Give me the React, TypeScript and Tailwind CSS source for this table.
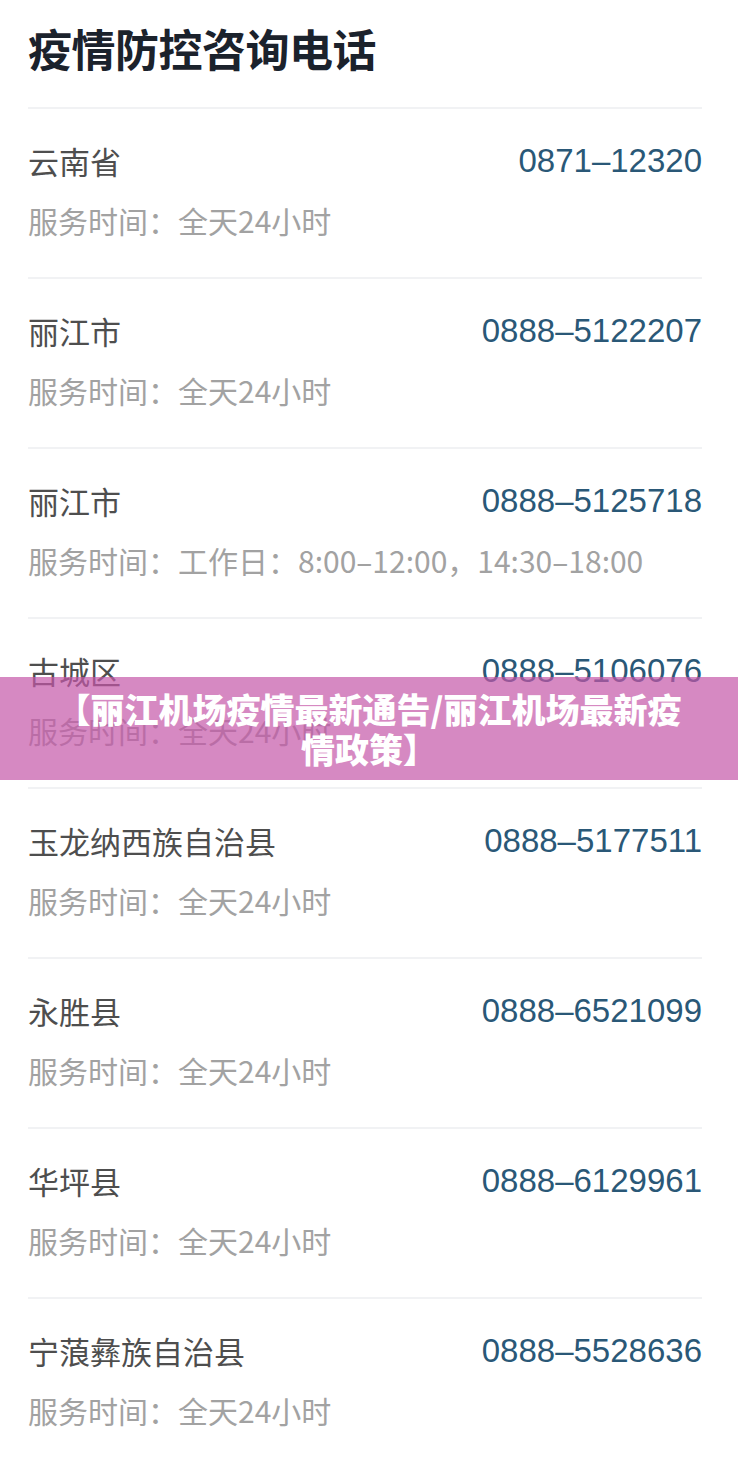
import React from "react";

interface Hotline {
  area: string;
  phone: string;
  hours: string;
}

const hotlines: Hotline[] = [
  { area: "云南省", phone: "0871–12320", hours: "全天24小时" },
  { area: "丽江市", phone: "0888–5122207", hours: "全天24小时" },
  { area: "丽江市", phone: "0888–5125718", hours: "工作日：8:00–12:00，14:30–18:00" },
  { area: "古城区", phone: "0888–5106076", hours: "全天24小时" },
  { area: "玉龙纳西族自治县", phone: "0888–5177511", hours: "全天24小时" },
  { area: "永胜县", phone: "0888–6521099", hours: "全天24小时" },
  { area: "华坪县", phone: "0888–6129961", hours: "全天24小时" },
  { area: "宁蒗彝族自治县", phone: "0888–5528636", hours: "全天24小时" },
];

const cjk = "font-['Noto_Sans_CJK_SC','Noto_Sans',sans-serif]";

export default function App() {
  return (
    <div className={`relative w-[738px] h-[1459px] overflow-hidden bg-white ${cjk}`}>
      <div className="pl-[28px] pr-[36px]">
        {/* Title */}
        <div className="h-[107px] pt-[16px]">
          <h1 className="text-[44px] leading-[64px] font-bold text-[#1b222c] tracking-[-0.5px]">疫情防控咨询电话</h1>
        </div>

        {/* Hotline list */}
        {hotlines.map((h, i) => (
          <div key={i} className="h-[170px] border-t-[2px] border-[#f1f2f4] pt-[30px]">
            <div className="flex items-center justify-between h-[44px]">
              <span className="text-[31px] text-[#4e4e4e]">{h.area}</span>
              <span className="font-['Liberation_Sans',sans-serif] text-[33px] text-[#2a5877]">{h.phone}</span>
            </div>
            <div className="mt-[15px] h-[44px] flex items-center text-[30px] text-[#a2a2a2]">
              服务时间：{h.hours}
            </div>
          </div>
        ))}
      </div>

      {/* Overlay banner */}
      <div className="absolute left-0 right-0 top-[677px] h-[103px] bg-[#c457a8]/70 flex items-center justify-center px-[49px]">
        <p className="text-center text-white font-black text-[34px] leading-[40px]">
          【丽江机场疫情最新通告/丽江机场最新疫情政策】
        </p>
      </div>
    </div>
  );
}
